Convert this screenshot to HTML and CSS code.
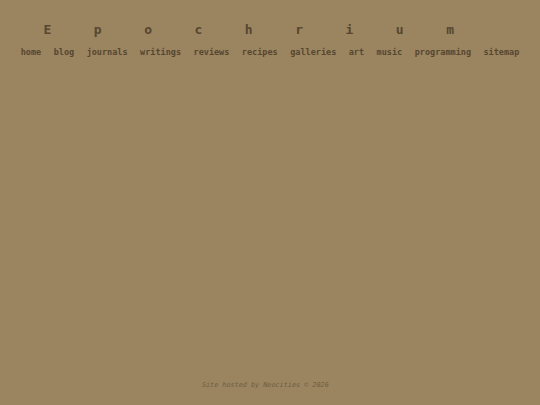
FILE: index.html
```html
<!DOCTYPE html>
<html lang="en">
<head>
<meta charset="utf-8">
<title>Epochrium</title>
<link rel="stylesheet" href="styles.css">
</head>
<body>
<div class="page">
  <header class="header">
    <h1 class="title">Epochrium</h1>
    <nav class="nav">
      <a href="#">home</a>
      <a href="#">blog</a>
      <a href="#">journals</a>
      <a href="#">writings</a>
      <a href="#">reviews</a>
      <a href="#">recipes</a>
      <a href="#">galleries</a>
      <a href="#">art</a>
      <a href="#">music</a>
      <a href="#">programming</a>
      <a href="#">sitemap</a>
    </nav>
  </header>
  <main class="main"></main>
  <footer class="footer">Site hosted by Neocities © 2026</footer>
</div>
</body>
</html>
```
FILE: styles.css
```css
html, body {
  margin: 0;
  padding: 0;
  background: #9a8560;
}
.page {
  min-height: 100vh;
  display: flex;
  flex-direction: column;
  font-family: "DejaVu Sans Mono", monospace;
  color: #574630;
}
.header {
  display: flex;
  flex-direction: column;
  align-items: center;
  padding-top: 20px;
}
.title {
  margin: 0;
  font-size: 13px;
  font-weight: bold;
  line-height: 19px;
  letter-spacing: 42.5px;
  text-align: center;
}
.nav {
  display: flex;
  justify-content: center;
  gap: 12.5px;
  margin-top: 7px;
  font-size: 8.5px;
  font-weight: bold;
  line-height: 12px;
}
.nav a {
  color: #574630;
  text-decoration: none;
}
.main {
  flex: 1;
}
.footer {
  text-align: center;
  font-size: 6.8px;
  font-style: italic;
  color: #6f5d40;
  line-height: 10px;
  padding: 0 9.4px 15px 0;
}
```
